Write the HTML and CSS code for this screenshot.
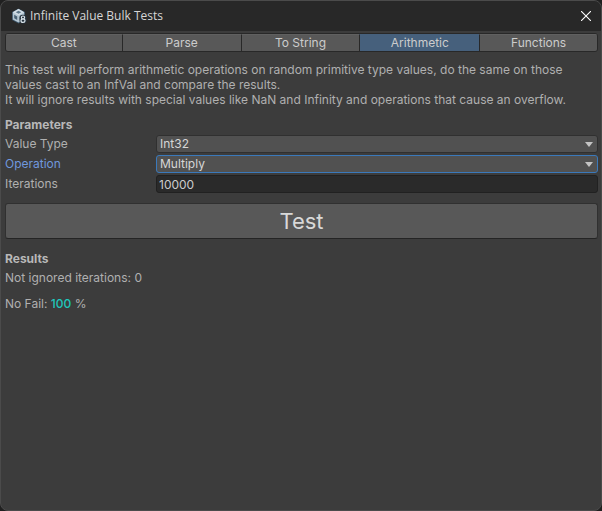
FILE: index.html
```html
<!DOCTYPE html>
<html lang="en">
<head>
<meta charset="utf-8">
<title>Infinite Value Bulk Tests</title>
<link rel="stylesheet" href="styles.css">
</head>
<body>
<div class="window">
  <header class="titlebar">
    <svg class="logo" viewBox="0 0 16 16" aria-hidden="true">
      <path d="M7.500 .5 14 4v8l-6.500 3.500L1 12V4z" fill="#3c5468"/>
      <path d="M7.500 1 13.200 4.200v7.300L7.500 14.500 1.800 11.500V4.200z" fill="#b4c6d2"/>
      <path d="M7.500 1 13.200 4.200 7.500 7.400 1.800 4.200z" fill="#d3dee6"/>
      <path d="M7.500 2.700 10.300 4.200 7.500 5.700 4.700 4.200z" fill="#5d7789"/>
      <path d="M3.200 6.800 6.200 8.500v3.500L3.200 10.300zM8.700 8.500 11 7.200v3L8.700 12z" fill="#4a6275"/>
      <rect x="8.500" y="6.800" width="7" height="8.700" rx="3" fill="#26333e"/>
      <ellipse cx="12" cy="9.500" rx="1.600" ry="1.500" fill="none" stroke="#dbe4ea" stroke-width="1.200"/>
      <ellipse cx="12" cy="12.700" rx="2" ry="1.700" fill="none" stroke="#dbe4ea" stroke-width="1.200"/>
    </svg>
    <h1 class="title">Infinite Value Bulk Tests</h1>
    <button class="close" type="button" aria-label="Close">
      <svg viewBox="0 0 10 10" aria-hidden="true"><path d="M0 0 10 10M10 0 0 10" stroke="#fff" stroke-width="1.100"/></svg>
    </button>
  </header>
  <main class="content">
    <nav class="tabs">
      <button class="tab" type="button">Cast</button>
      <button class="tab" type="button">Parse</button>
      <button class="tab" type="button">To String</button>
      <button class="tab tab-active" type="button">Arithmetic</button>
      <button class="tab" type="button">Functions</button>
    </nav>
    <p class="description">This test will perform arithmetic operations on random primitive type values, do the same on those values cast to an InfVal and compare the results.<br>It will ignore results with special values like NaN and Infinity and operations that cause an overflow.</p>
    <form class="parameters">
      <h2 class="heading">Parameters</h2>
      <div class="field">
        <label for="value-type">Value Type</label>
        <div class="dropdown"><select id="value-type"><option>Int32</option></select></div>
      </div>
      <div class="field field-focused">
        <label for="operation">Operation</label>
        <div class="dropdown"><select id="operation"><option>Multiply</option></select></div>
      </div>
      <div class="field">
        <label for="iterations">Iterations</label>
        <input id="iterations" type="text" value="10000">
      </div>
      <button class="run" type="button">Test</button>
    </form>
    <section class="results">
      <h2 class="heading">Results</h2>
      <p class="line">Not ignored iterations: 0</p>
      <p class="line summary">No Fail: <span class="rate">100</span> %</p>
    </section>
  </main>
</div>
</body>
</html>
```
FILE: styles.css
```css
* { box-sizing: border-box; }

body {
  margin: 0;
  background: #202020;
  color: #b0b0b0;
  font: 12px/20px Inter, "Liberation Sans", sans-serif;
}

h1, h2, p { margin: 0; }

button, input, select { font: inherit; }

.window {
  min-height: 100vh;
  border: 1px solid #4b4b4b;
  border-radius: 8px;
  background: #3c3c3c;
  overflow: hidden;
}

.titlebar {
  display: flex;
  align-items: center;
  height: 30px;
  padding: 0 10px;
  background: #282828;
}

.logo {
  width: 16px;
  height: 16px;
}

.title {
  flex: 1;
  margin-left: 3px;
  color: #d6d6d6;
  font: 12px/16px "Open Sans", "Noto Sans", sans-serif;
}

.close {
  display: flex;
  padding: 0;
  border: 0;
  background: none;
}

.close svg {
  width: 10px;
  height: 10px;
}

.content { padding: 2px 3px 0 4px; }

.tabs {
  display: grid;
  grid-template-columns: 116fr 119fr 119fr 120fr 118fr;
  height: 19px;
  border: 1px solid #282828;
  border-radius: 3px;
  overflow: hidden;
}

.tab {
  padding: 0;
  border: 0;
  border-top: 1px solid #606060;
  background: #585858;
  color: #cccccc;
  line-height: 16px;
}

.tab + .tab { border-left: 1px solid #282828; }

.tab-active {
  border-top-color: #46607c;
  background: #46607c;
}

.description {
  padding: 10px 0 8px;
  line-height: 15px;
}

.heading {
  color: #b8b8b8;
  font-size: 12px;
  font-weight: 700;
  line-height: 19px;
}

.field {
  display: grid;
  grid-template-columns: 151px 1fr;
  align-items: center;
  height: 20px;
}

.field-focused label { color: #7098dc; }

.dropdown { position: relative; }

.dropdown::after {
  content: "";
  position: absolute;
  top: 7px;
  right: 5px;
  border: 4px solid transparent;
  border-top: 5px solid #c4c4c4;
  border-bottom: 0;
  pointer-events: none;
}

select, input {
  display: block;
  width: 100%;
  height: 18px;
  border: 1px solid #303030;
  border-radius: 3px;
  outline: 0;
  line-height: 16px;
}

select {
  appearance: none;
  padding: 0 20px 1px 3px;
  background: #515151;
  color: #d6d6d6;
}

.field-focused select { border-color: #3a79bb; }

input {
  padding: 0 2px;
  border-color: #212121;
  background: #2a2a2a;
  color: #cccccc;
}

.run {
  display: block;
  width: 100%;
  height: 36px;
  margin: 9px 0 10px;
  padding: 0;
  border: 1px solid #303030;
  border-bottom-color: #242424;
  border-radius: 3px;
  background: #585858;
  color: #d8d8d8;
  font-size: 22px;
  line-height: 32px;
}

.summary { margin-top: 6px; }

.rate {
  color: #1fc7bd;
  font-weight: 500;
}
```
